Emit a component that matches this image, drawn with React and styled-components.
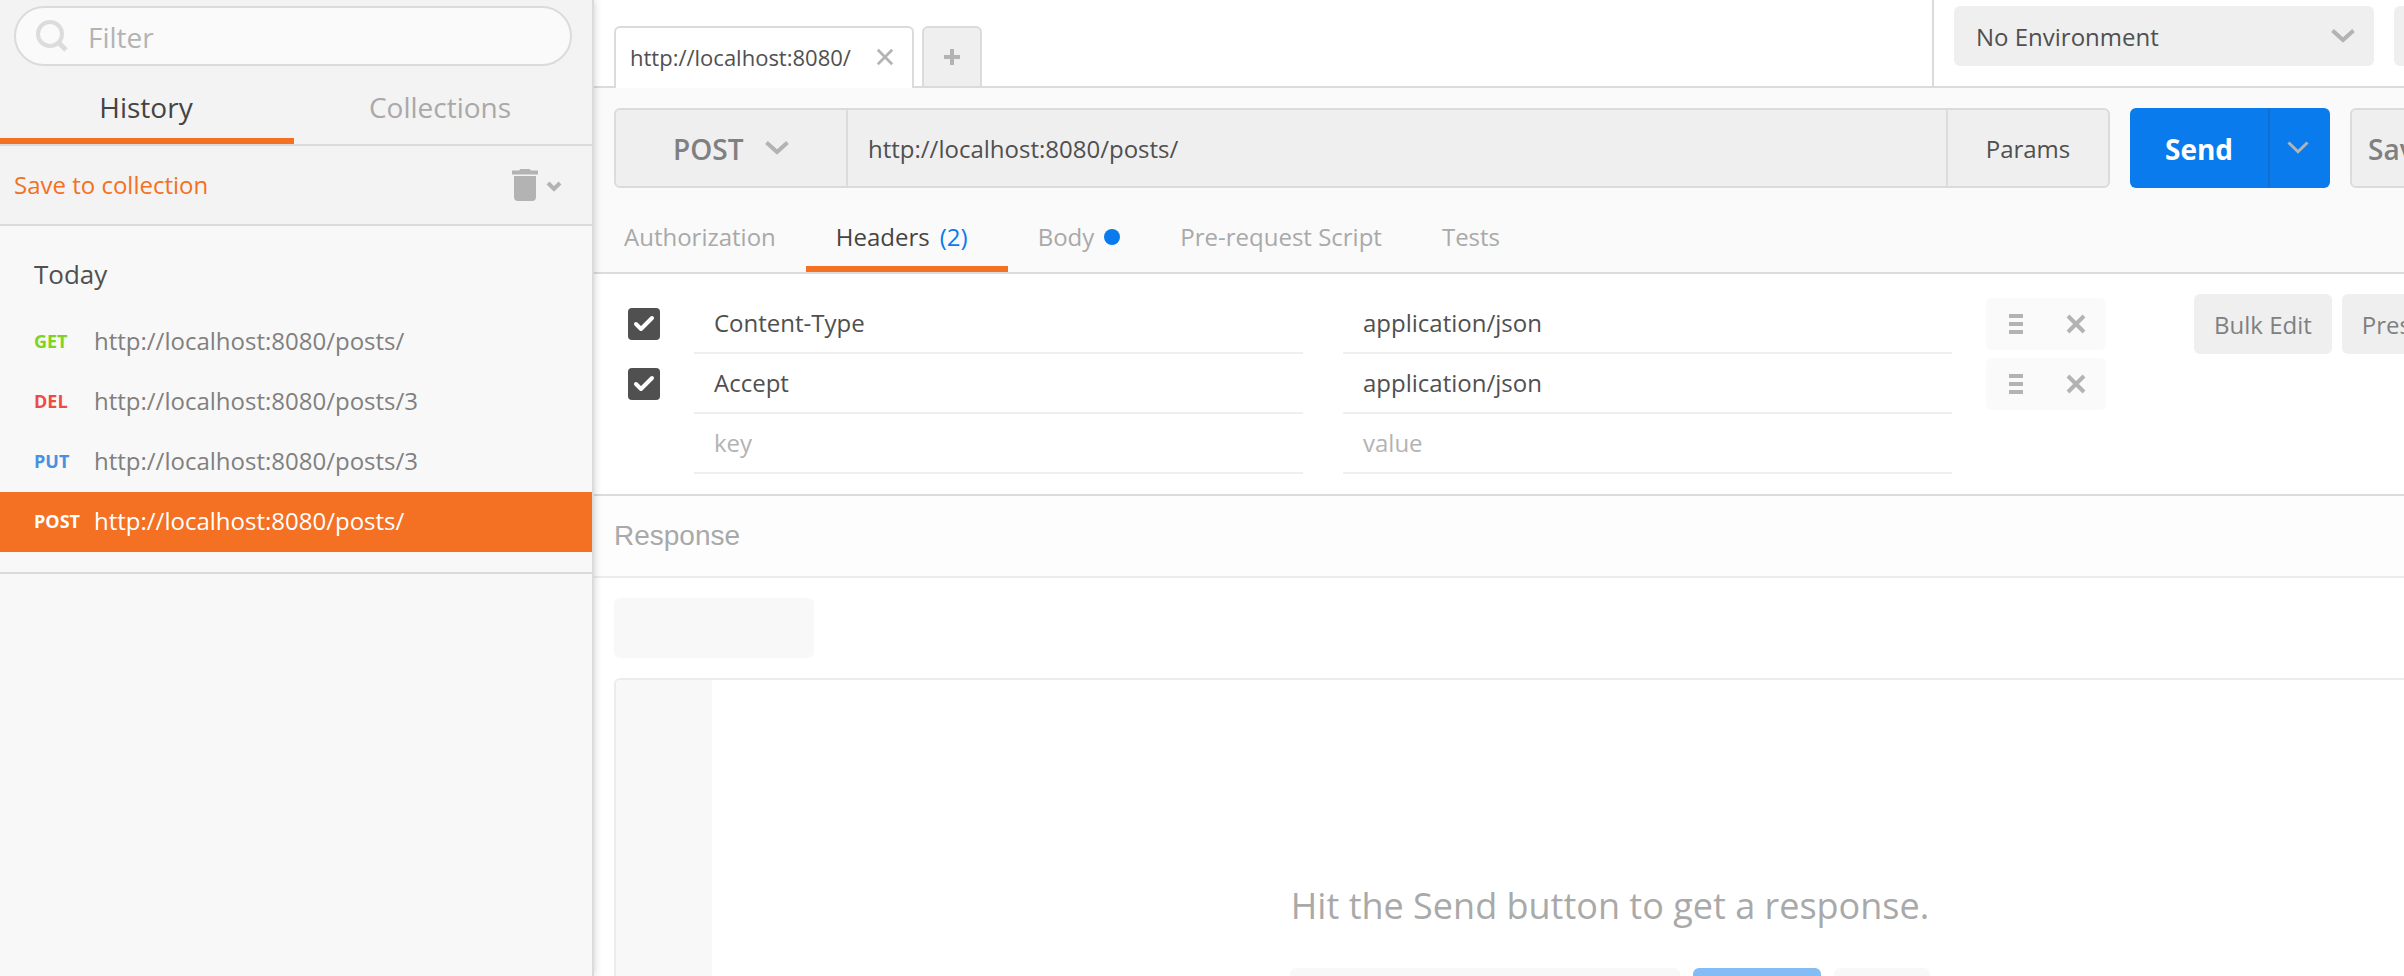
import React from "react";
import styled, { createGlobalStyle, css } from "styled-components";

const color = {
  line: "#dbdbdb",
  softLine: "#ececec",
  control: "#efefef",
  dark: "#505050",
  mid: "#808080",
  muted: "#a9a9a9",
  icon: "#b3b3b3",
  orange: "#f47023",
  blue: "#097bed",
};

const GlobalStyle = createGlobalStyle`
  *, *::before, *::after { box-sizing: border-box; }
  body {
    margin: 0;
    background: #fff;
    color: ${color.dark};
    font-family: "Open Sans", "Noto Sans", sans-serif;
    font-size: 24px;
    line-height: 32px;
  }
  button, input, select { font: inherit; color: inherit; margin: 0; }
  button { cursor: pointer; }
`;

const reset = css`
  border: 0;
  padding: 0;
  background: none;
  outline: none;
`;

const Shell = styled.div`
  display: flex;
  height: 100vh;
  overflow: hidden;
`;

/* Sidebar */

const Sidebar = styled.aside`
  position: relative;
  z-index: 1;
  flex: 0 0 594px;
  background: #f8f8f8;
  border-right: 2px solid ${color.line};
  box-shadow: 0 0 8px rgba(0, 0, 0, 0.2);
`;

const SidebarHead = styled.div`
  background: #f3f3f3;
`;

const FilterArea = styled.div`
  padding: 6px 20px 10px 14px;
`;

const FilterBox = styled.label`
  display: flex;
  align-items: center;
  gap: 20px;
  height: 60px;
  padding: 0 20px;
  border: 2px solid ${color.line};
  border-radius: 30px;
  background: #fafafa;
`;

const FilterInput = styled.input`
  ${reset}
  flex: 1;
  min-width: 0;
  padding-top: 2px;
  font-size: 28px;
  &::placeholder { color: #b3b3b3; opacity: 1; }
`;

const SideTabs = styled.div`
  display: flex;
  padding-right: 4px;
  border-bottom: 2px solid ${color.line};
`;

const SideTab = styled.button`
  ${reset}
  flex: 1;
  height: 68px;
  padding-right: 2px;
  border-bottom: 6px solid ${(p) => (p.$active ? color.orange : "transparent")};
  color: ${(p) => (p.$active ? "#444" : color.muted)};
  font-size: 28px;
`;

const CollectionBar = styled.div`
  display: flex;
  align-items: center;
  justify-content: space-between;
  height: 80px;
  padding: 0 30px 0 14px;
  border-bottom: 2px solid ${color.line};
`;

const SaveLink = styled.a`
  color: ${color.orange};
  text-decoration: none;
`;

const TrashButton = styled.button`
  ${reset}
  display: flex;
  align-items: center;
  gap: 8px;
`;

const Day = styled.section`
  padding: 10px 0 20px;
  border-bottom: 2px solid ${color.line};
`;

const DayTitle = styled.h2`
  margin: 0;
  padding: 0 34px;
  font-size: 26px;
  font-weight: 400;
  line-height: 76px;
`;

const HistoryList = styled.ul`
  margin: 0;
  padding: 0;
  list-style: none;
`;

const HistoryRow = styled.a`
  display: grid;
  grid-template-columns: 60px 1fr;
  align-items: center;
  height: 60px;
  padding: 0 34px 2px;
  text-decoration: none;
  color: ${(p) => (p.$active ? "#fff" : color.mid)};
  background: ${(p) => (p.$active ? color.orange : "transparent")};
`;

const Verb = styled.span`
  color: ${(p) => p.$tone};
  font-size: 18px;
  font-weight: 700;
`;

/* Workspace: wider than the room beside the sidebar, so its right end is cut */

const Viewport = styled.main`
  flex: 1;
  min-width: 0;
  overflow: hidden;
`;

const Workspace = styled.div`
  display: flex;
  flex-direction: column;
  width: calc(100% + 222px);
  min-height: 100%;
`;

const TopBar = styled.header`
  display: flex;
  align-items: flex-end;
  gap: 8px;
  height: 88px;
  padding-left: 20px;
  border-bottom: 2px solid ${color.line};
`;

const RequestTab = styled.div`
  display: flex;
  align-items: center;
  justify-content: space-between;
  width: 300px;
  height: 62px;
  margin-bottom: -2px;
  padding: 0 18px 2px 14px;
  border: 2px solid ${color.line};
  border-bottom: 0;
  border-radius: 6px 6px 0 0;
  background: #fff;
  font-size: 22px;
`;

const AddTab = styled.button`
  ${reset}
  display: grid;
  place-items: center;
  width: 60px;
  height: 60px;
  border: 2px solid ${color.line};
  border-bottom: 0;
  border-radius: 6px 6px 0 0;
  background: ${color.control};
`;

const IconButton = styled.button`
  ${reset}
  display: grid;
  place-items: center;
`;

const Environment = styled.div`
  display: flex;
  gap: 20px;
  align-self: stretch;
  width: 694px;
  margin-left: auto;
  padding: 6px 20px;
  border-left: 2px solid ${color.line};
`;

const SelectBox = styled.div`
  display: grid;
  align-items: center;
  flex: none;
  width: ${(p) => p.$width}px;
  height: ${(p) => p.$height};
  background: ${color.control};
  border-radius: 6px;
  > * { grid-area: 1 / 1; }
  > svg {
    justify-self: end;
    margin-right: ${(p) => p.$inset}px;
    pointer-events: none;
  }
`;

const Select = styled.select`
  ${reset}
  appearance: none;
  width: 100%;
  height: 100%;
  padding-top: 2px;
  padding-left: ${(p) => p.$pad}px;
  ${(p) =>
    p.$strong &&
    css`
      color: ${color.mid};
      font-size: 28px;
      font-weight: 600;
    `}
`;

const FlatButton = styled.button`
  ${reset}
  min-width: 60px;
  height: 60px;
  padding: 2px 20px 0;
  border-radius: 6px;
  background: ${color.control};
  color: ${color.mid};
`;

const RequestArea = styled.section`
  background: #fafafa;
  border-bottom: 2px solid ${color.line};
`;

const RequestLine = styled.form`
  display: flex;
  gap: 20px;
  padding: 20px 20px 0;
`;

const UrlGroup = styled.div`
  display: flex;
  flex: 1;
  height: 80px;
  border: 2px solid ${color.line};
  border-radius: 6px;
  background: ${color.control};
`;

const UrlInput = styled.input`
  ${reset}
  flex: 1;
  min-width: 0;
  padding: 2px 20px 0;
  border: solid ${color.line};
  border-width: 0 2px;
`;

const ParamsButton = styled.button`
  ${reset}
  width: 160px;
  padding-top: 2px;
`;

const SendGroup = styled.div`
  display: flex;
  width: 200px;
  height: 80px;
  border-radius: 6px;
  overflow: hidden;
  background: ${color.blue};
`;

const SendButton = styled.button`
  ${reset}
  flex: 1;
  padding-top: 2px;
  color: #fff;
  font-size: 28px;
  font-weight: 700;
`;

const SendMenu = styled.button`
  ${reset}
  display: grid;
  place-items: center;
  width: 62px;
  padding: 0 4px 2px 0;
  border-left: 2px solid #126fcf;
`;

const SaveButton = styled.button`
  ${reset}
  width: 256px;
  height: 80px;
  padding: 2px 16px 0;
  border: 2px solid ${color.line};
  border-radius: 6px;
  background: ${color.control};
  color: ${color.mid};
  font-size: 28px;
  font-weight: 600;
  text-align: left;
`;

const RequestTabs = styled.nav`
  display: flex;
  padding-top: 20px;
`;

const SectionTab = styled.button`
  ${reset}
  display: flex;
  align-items: center;
  height: 64px;
  padding: 0 30px;
  border-bottom: 6px solid ${(p) => (p.$active ? color.orange : "transparent")};
  color: ${(p) => (p.$active ? "#444" : color.muted)};
`;

const Count = styled.span`
  margin: 0 10px;
  color: ${color.blue};
`;

const Dot = styled.span`
  width: 16px;
  height: 16px;
  margin-left: 10px;
  border-radius: 50%;
  background: ${color.blue};
`;

const HeadersArea = styled.section`
  display: flex;
  align-items: flex-start;
  padding: 20px;
  border-bottom: 2px solid ${color.line};
`;

const HeadersTable = styled.table`
  display: block;
  flex: 1;
  min-width: 0;
  > tbody { display: block; }
`;

const HeaderRow = styled.tr`
  display: grid;
  grid-template-columns: 80px 1fr 40px 1fr 34px 120px;
  height: 60px;
  > td { padding: 0; }
  > td:nth-child(3) { grid-column: 4; }
  > td:nth-child(4) { grid-column: 6; }
`;

const CheckCell = styled.td`
  display: flex;
  align-items: center;
  && { padding-left: 14px; }
`;

const CheckLabel = styled.label`
  display: grid;
  > * { grid-area: 1 / 1; }
  > svg { pointer-events: none; }
`;

const Check = styled.input`
  appearance: none;
  width: 32px;
  height: 32px;
  border-radius: 4px;
  background: #505050;
`;

const FieldInput = styled.input`
  ${reset}
  width: 100%;
  height: 60px;
  padding: 0 20px 2px;
  border-bottom: 2px solid ${color.control};
  &::placeholder { color: #b3b3b3; opacity: 1; }
`;

const ActionsCell = styled.td`
  display: flex;
  align-items: center;
`;

const Actions = styled.div`
  display: grid;
  grid-template-columns: 1fr 1fr;
  width: 120px;
  height: 52px;
  border-radius: 6px;
  background: #fafafa;
`;

const HeaderTools = styled.div`
  display: flex;
  gap: 10px;
  width: 412px;
  margin-left: 88px;
`;

const ResponseTitle = styled.h2`
  margin: 0;
  padding: 0 20px;
  border-bottom: 2px solid ${color.softLine};
  background: #fdfdfd;
  color: ${color.muted};
  font-family: "Liberation Sans", Arial, sans-serif;
  font-size: 28px;
  font-weight: 400;
  line-height: 80px;
`;

const ResponseArea = styled.section`
  display: flex;
  flex-direction: column;
  flex: 1;
  gap: 20px;
  padding: 20px 20px 0;
`;

const Ghost = styled.div`
  width: ${(p) => p.$width}px;
  height: 60px;
  border-radius: 6px;
  background: ${(p) => (p.$primary ? "#84bcf6" : "#f8f8f8")};
`;

const ResponsePanel = styled.div`
  display: grid;
  flex: 1;
  border: 2px solid ${color.softLine};
  border-radius: 6px;
  overflow: hidden;
  > * { grid-area: 1 / 1; }
`;

const Gutter = styled.div`
  width: 96px;
  background: #f8f8f8;
`;

const EmptyState = styled.div`
  display: flex;
  flex-direction: column;
  align-items: center;
  gap: 38px;
  padding-top: 202px;
`;

const EmptyText = styled.p`
  margin: 0;
  color: #a9a9a9;
  font-size: 36px;
  line-height: 48px;
`;

const GhostRow = styled.div`
  display: flex;
  gap: 13px;
`;

/* Icons */

const SearchIcon = () => (
  <svg width="32" height="32" viewBox="0 0 32 32" fill="none" stroke="#dcdcdc" aria-hidden="true">
    <circle cx="14" cy="14" r="12" strokeWidth="4" />
    <path d="M22 22L30 30" strokeWidth="5" />
  </svg>
);

const TrashIcon = () => (
  <svg width="26" height="32" viewBox="0 0 26 32" fill={color.icon} aria-hidden="true">
    <path d="M0 1.5h7l1.5-1.5h9L19 1.5h7V5.500H0z" />
    <path d="M2 7h22v21a4 4 0 0 1-4 4H6a4 4 0 0 1-4-4z" />
  </svg>
);

const Chevron = ({ w = 24, h = 14, stroke = 4 }) => (
  <svg width={w} height={h} viewBox={`0 0 ${w} ${h}`} fill="none" stroke={color.icon} strokeWidth={stroke} aria-hidden="true">
    <path d={`M1.5 1.5L${w / 2} ${h - stroke * 0.75}L${w - 1.5} 1.5`} />
  </svg>
);

const Cross = ({ size, stroke }) => (
  <svg width={size} height={size} viewBox="0 0 20 20" stroke={color.icon} strokeWidth={stroke} aria-hidden="true">
    <path d="M2 2L18 18M18 2L2 18" />
  </svg>
);

const Plus = () => (
  <svg width="16" height="16" viewBox="0 0 16 16" fill={color.icon} aria-hidden="true">
    <path d="M6 0h4v6h6v4h-6v6H6v-6H0V6h6z" />
  </svg>
);

const Bars = () => (
  <svg width="14" height="20" viewBox="0 0 14 20" fill={color.icon} aria-hidden="true">
    <path d="M0 0h14v4H0zM0 8h14v4H0zM0 16h14v4H0z" />
  </svg>
);

const Tick = () => (
  <svg width="32" height="32" viewBox="0 0 32 32" fill="none" stroke="#fff" strokeWidth="4" strokeLinecap="round" strokeLinejoin="round" aria-hidden="true">
    <path d="M8 16L13 21L24 10" />
  </svg>
);

const history = [
  { verb: "GET", tone: "#7ed321", url: "http://localhost:8080/posts/" },
  { verb: "DEL", tone: "#ed4b48", url: "http://localhost:8080/posts/3" },
  { verb: "PUT", tone: "#4a90e2", url: "http://localhost:8080/posts/3" },
  { verb: "POST", tone: "#fff", url: "http://localhost:8080/posts/", active: true },
];

const headers = [
  { key: "Content-Type", value: "application/json" },
  { key: "Accept", value: "application/json" },
];

export default function App() {
  return (
    <Shell>
      <GlobalStyle />
      <Sidebar>
        <SidebarHead>
          <FilterArea>
            <FilterBox>
              <SearchIcon />
              <FilterInput type="text" placeholder="Filter" aria-label="Filter" />
            </FilterBox>
          </FilterArea>
          <SideTabs>
            <SideTab type="button" $active>History</SideTab>
            <SideTab type="button">Collections</SideTab>
          </SideTabs>
          <CollectionBar>
            <SaveLink href="#save">Save to collection</SaveLink>
            <TrashButton type="button" aria-label="Clear history">
              <TrashIcon />
              <svg width="16" height="16" viewBox="0 0 16 16" fill="none" stroke={color.icon} strokeWidth="4" aria-hidden="true">
                <path d="M2 6L8 12L14 6" />
              </svg>
            </TrashButton>
          </CollectionBar>
        </SidebarHead>
        <Day>
          <DayTitle>Today</DayTitle>
          <HistoryList>
            {history.map((h) => (
              <li key={h.verb}>
                <HistoryRow href="#request" $active={h.active}>
                  <Verb $tone={h.tone}>{h.verb}</Verb>
                  <span>{h.url}</span>
                </HistoryRow>
              </li>
            ))}
          </HistoryList>
        </Day>
      </Sidebar>

      <Viewport>
        <Workspace>
          <TopBar>
            <RequestTab>
              <span>http://localhost:8080/</span>
              <IconButton type="button" aria-label="Close tab">
                <Cross size={18} stroke={3} />
              </IconButton>
            </RequestTab>
            <AddTab type="button" aria-label="New tab">
              <Plus />
            </AddTab>
            <Environment>
              <SelectBox $width={420} $height="60px" $inset={19}>
                <Select $pad={22} aria-label="Environment">
                  <option>No Environment</option>
                </Select>
                <Chevron />
              </SelectBox>
              <FlatButton type="button" aria-label="Environment quick look" />
            </Environment>
          </TopBar>

          <RequestArea>
            <RequestLine onSubmit={(e) => e.preventDefault()}>
              <UrlGroup>
                <SelectBox $width={230} $height="76px" $inset={57}>
                  <Select $pad={57} $strong aria-label="Method" defaultValue="POST">
                    <option>GET</option>
                    <option>POST</option>
                    <option>PUT</option>
                    <option>DELETE</option>
                  </Select>
                  <Chevron />
                </SelectBox>
                <UrlInput type="text" aria-label="Request URL" defaultValue="http://localhost:8080/posts/" />
                <ParamsButton type="button">Params</ParamsButton>
              </UrlGroup>
              <SendGroup>
                <SendButton type="submit">Send</SendButton>
                <SendMenu type="button" aria-label="Send options">
                  <Chevron w={22} h={13} stroke={3} />
                </SendMenu>
              </SendGroup>
              <SaveButton type="button">Save</SaveButton>
            </RequestLine>
            <RequestTabs>
              <SectionTab type="button">Authorization</SectionTab>
              <SectionTab type="button" $active>
                Headers<Count>(2)</Count>
              </SectionTab>
              <SectionTab type="button">
                Body<Dot />
              </SectionTab>
              <SectionTab type="button">Pre-request Script</SectionTab>
              <SectionTab type="button">Tests</SectionTab>
            </RequestTabs>
          </RequestArea>

          <HeadersArea>
            <HeadersTable>
              <tbody>
                {headers.map((h) => (
                  <HeaderRow key={h.key}>
                    <CheckCell>
                      <CheckLabel>
                        <Check type="checkbox" defaultChecked aria-label={`Use ${h.key}`} />
                        <Tick />
                      </CheckLabel>
                    </CheckCell>
                    <td><FieldInput aria-label="Header key" defaultValue={h.key} /></td>
                    <td><FieldInput aria-label="Header value" defaultValue={h.value} /></td>
                    <ActionsCell>
                      <Actions>
                        <IconButton type="button" aria-label="Reorder"><Bars /></IconButton>
                        <IconButton type="button" aria-label="Remove"><Cross size={20} stroke={4} /></IconButton>
                      </Actions>
                    </ActionsCell>
                  </HeaderRow>
                ))}
                <HeaderRow>
                  <td />
                  <td><FieldInput aria-label="New header key" placeholder="key" /></td>
                  <td><FieldInput aria-label="New header value" placeholder="value" /></td>
                </HeaderRow>
              </tbody>
            </HeadersTable>
            <HeaderTools>
              <FlatButton type="button">Bulk Edit</FlatButton>
              <FlatButton type="button">Presets</FlatButton>
            </HeaderTools>
          </HeadersArea>

          <ResponseTitle>Response</ResponseTitle>
          <ResponseArea>
            <Ghost $width={200} />
            <ResponsePanel>
              <Gutter />
              <EmptyState>
                <EmptyText>Hit the Send button to get a response.</EmptyText>
                <GhostRow>
                  <Ghost $width={390} />
                  <Ghost $width={128} $primary />
                  <Ghost $width={96} />
                </GhostRow>
              </EmptyState>
            </ResponsePanel>
          </ResponseArea>
        </Workspace>
      </Viewport>
    </Shell>
  );
}
